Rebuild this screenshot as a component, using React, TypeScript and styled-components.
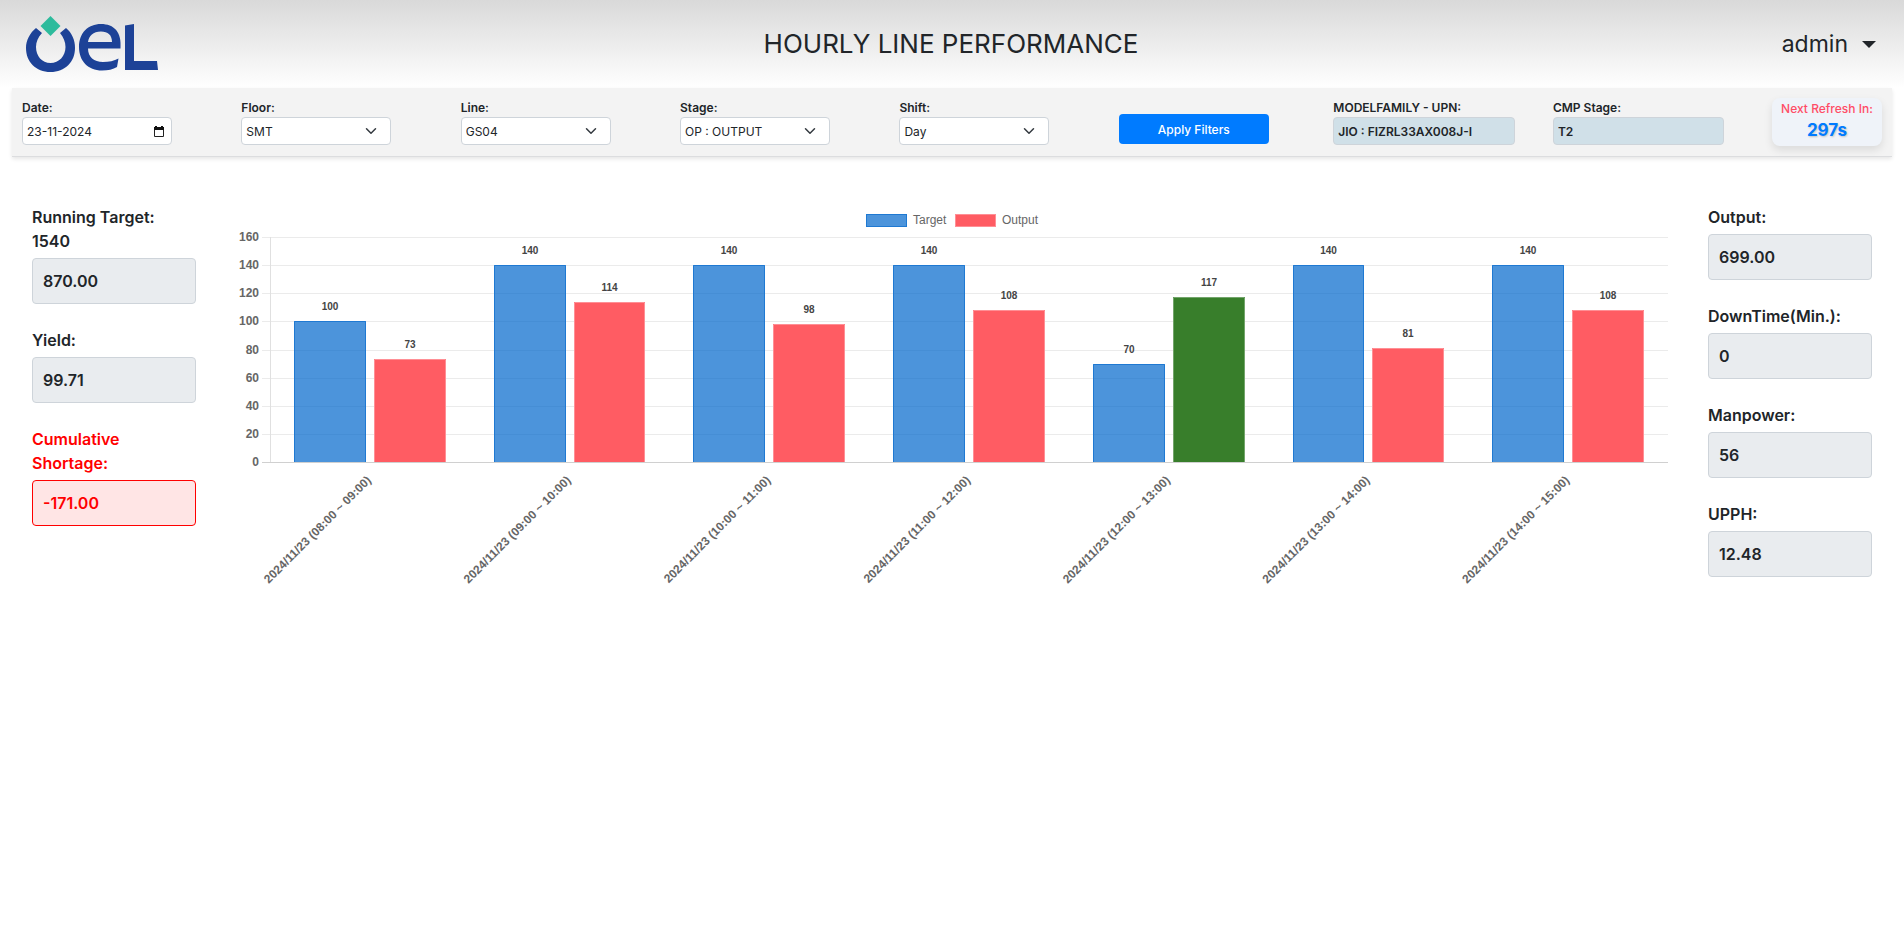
import { useLayoutEffect, useRef, useState } from "react";
import styled, { createGlobalStyle } from "styled-components";

const GlobalStyle = createGlobalStyle`
  *, *::before, *::after { box-sizing: border-box; }
  body {
    margin: 0;
    background: #fff;
    color: #212529;
    font: 400 16px/24px Inter, sans-serif;
  }
  input, select, button { font-family: inherit; }
`;

const Header = styled.header`
  display: grid;
  grid-template-columns: 1fr auto 1fr;
  align-items: center;
  height: 88px;
  padding: 0 28px 0 26px;
  background: linear-gradient(#d9d9d9, #fff);
`;

const Logo = styled.svg`
  display: block;
  width: 132px;
  height: 58px;
`;

const Title = styled.h1`
  margin: 0;
  font-size: 26px;
  line-height: 32px;
  font-weight: 400;
`;

const UserMenu = styled.button`
  justify-self: end;
  display: flex;
  align-items: center;
  gap: 14px;
  padding: 0;
  border: 0;
  background: none;
  color: #212529;
  font-size: 23px;
  line-height: 32px;
  font-weight: 400;
`;

const Caret = styled.span`
  border: 7px solid transparent;
  border-top-color: currentColor;
  border-bottom: 0;
`;

const FilterBar = styled.form`
  display: grid;
  grid-template-columns: repeat(5, 2193fr) 2145fr 2195fr 2190fr 1100fr;
  align-items: end;
  margin: 0 12px;
  padding: 10px 10px;
  background: #f3f3f3;
  border-bottom: 1px solid #dcdddf;
  box-shadow: 0 2px 4px rgba(0, 0, 0, 0.1);
`;

const Field = styled.div<{ $width: number }>`
  display: flex;
  flex-direction: column;
  width: ${(p) => p.$width}px;
  max-width: 100%;
  margin-bottom: 1px;
`;

const FieldLabel = styled.label`
  font-size: 12px;
  line-height: 18px;
  font-weight: 600;
`;

const Control = styled.input<{ $filled?: boolean }>`
  width: 100%;
  height: 28px;
  padding: 0 4px;
  border: 1px solid #ced4da;
  border-radius: 4px;
  background: ${(p) => (p.$filled ? "#d0e0e8" : "#fff")};
  color: #212529;
  font-size: 12px;
  font-weight: ${(p) => (p.$filled ? 600 : 400)};
`;

const ControlBox = styled.div`
  display: grid;
  align-items: center;
  > * { grid-area: 1 / 1; }
`;

const Select = styled(Control)`
  appearance: none;
`;

const Chevron = styled.svg`
  justify-self: end;
  width: 12px;
  height: 12px;
  margin-right: 14px;
  pointer-events: none;
`;

const CalendarIcon = styled.svg`
  justify-self: end;
  width: 10px;
  height: 11px;
  margin-right: 8px;
  pointer-events: none;
`;

const ApplyButton = styled.button`
  width: 150px;
  height: 30px;
  margin-bottom: 2px;
  border: 0;
  border-radius: 4px;
  background: #007bff;
  color: #fff;
  font-size: 12px;
  font-weight: 500;
`;

const Refresh = styled.div`
  height: 48px;
  padding-top: 2px;
  border-radius: 8px;
  background: #eff3f9;
  box-shadow: 0 4px 8px rgba(0, 0, 0, 0.1);
  text-align: center;
  white-space: nowrap;
  color: #ff4d67;
  font-size: 12px;
  line-height: 18px;
  font-weight: 500;
`;

const Countdown = styled.div`
  color: #007bff;
  font-size: 17px;
  line-height: 24px;
  font-weight: 700;
  text-shadow: 1px 1px 2px rgba(0, 0, 0, 0.2);
`;

const Main = styled.main`
  display: grid;
  grid-template-columns: 164px minmax(0, 1fr) 164px;
  align-items: start;
  padding: 48px 32px;
`;

const Stats = styled.section`
  display: grid;
  gap: 24px;
`;

const Stat = styled.div<{ $alert?: boolean }>`
  display: grid;
  gap: 5px;
  color: ${(p) => (p.$alert ? "#f00" : "#212529")};
  font-weight: 600;
`;

const StatValue = styled.input<{ $alert?: boolean }>`
  width: 100%;
  height: 46px;
  padding: 0 10px;
  border: 1px solid ${(p) => (p.$alert ? "#f00" : "#ced4da")};
  border-radius: 4px;
  background: ${(p) => (p.$alert ? "#ffe5e5" : "#e9ecef")};
  color: inherit;
  font-size: 16px;
  font-weight: 600;
`;

const ChartArea = styled.div`
  margin: 0 40px 0 33px;
`;

const ChartSvg = styled.svg`
  display: block;
  width: 100%;
  height: 390px;
  font-family: "Liberation Sans", Arial, sans-serif;
`;

const selects = [
  { id: "floor", label: "Floor:", value: "SMT" },
  { id: "line", label: "Line:", value: "GS04" },
  { id: "stage", label: "Stage:", value: "OP : OUTPUT" },
  { id: "shift", label: "Shift:", value: "Day" },
];

const leftStats = [
  { id: "running", label: "Running Target: 1540", value: "870.00" },
  { id: "yield", label: "Yield:", value: "99.71" },
  { id: "shortage", label: "Cumulative Shortage:", value: "-171.00", alert: true },
];

const rightStats = [
  { id: "output", label: "Output:", value: "699.00" },
  { id: "downtime", label: "DownTime(Min.):", value: "0" },
  { id: "manpower", label: "Manpower:", value: "56" },
  { id: "upph", label: "UPPH:", value: "12.48" },
];

const hours = [
  { label: "2024/11/23 (08:00 ~ 09:00)", target: 100, output: 73 },
  { label: "2024/11/23 (09:00 ~ 10:00)", target: 140, output: 114 },
  { label: "2024/11/23 (10:00 ~ 11:00)", target: 140, output: 98 },
  { label: "2024/11/23 (11:00 ~ 12:00)", target: 140, output: 108 },
  { label: "2024/11/23 (12:00 ~ 13:00)", target: 70, output: 117 },
  { label: "2024/11/23 (13:00 ~ 14:00)", target: 140, output: 81 },
  { label: "2024/11/23 (14:00 ~ 15:00)", target: 140, output: 108 },
];

const TARGET = { fill: "rgba(0,102,204,0.7)", stroke: "#1f79d2" };
const BEHIND = { fill: "#ff5c63", stroke: "#ff8f95" };
const AHEAD = { fill: "#387e2b", stroke: "#73a56b" };

type Tone = typeof TARGET;

function Bar({ x, width, value, base, unit, tone }: {
  x: number; width: number; value: number; base: number; unit: number; tone: Tone;
}) {
  const left = Math.round(x);
  const right = Math.round(x + width);
  const top = Math.round(base - value * unit);
  return (
    <g>
      <rect x={left} y={top} width={right - left} height={base - top} fill={tone.fill} />
      <path
        d={`M${left + 0.5} ${base}V${top + 0.5}H${right - 0.5}V${base}`}
        fill="none"
        stroke={tone.stroke}
      />
      <text x={(left + right) / 2} y={top - 11} textAnchor="middle" fontSize="10" fontWeight="700" fill="#444">
        {value}
      </text>
    </g>
  );
}

function Chart() {
  const box = useRef<HTMLDivElement>(null);
  const [width, setWidth] = useState(1439);

  useLayoutEffect(() => {
    const node = box.current;
    if (!node) return;
    const measure = () => setWidth(node.clientWidth);
    measure();
    const observer = new ResizeObserver(measure);
    observer.observe(node);
    return () => observer.disconnect();
  }, []);

  const left = 41;
  const top = 32;
  const base = 257;
  const unit = (base - top) / 160;
  const step = (width - left) / hours.length;
  const slot = step * 0.4;
  const barWidth = slot * 0.9;
  const middle = Math.round(width / 2) + 4;

  return (
    <ChartArea ref={box}>
      <ChartSvg role="img" aria-label="Target and output by hour">
        <g fontSize="12" fill="#666">
          <rect x={middle - 86.5} y="9.5" width="40" height="12" {...TARGET} />
          <text x={middle - 40} y="19">Target</text>
          <rect x={middle + 2.5} y="9.5" width="40" height="12" {...BEHIND} />
          <text x={middle + 49} y="19">Output</text>
        </g>
        {[0, 20, 40, 60, 80, 100, 120, 140, 160].map((tick) => {
          const y = Math.round(base - tick * unit);
          return (
            <g key={tick}>
              <path d={`M${left - 8} ${y + 0.5}H${width}`} stroke={tick ? "#ebebeb" : "#d0d0d0"} />
              <text x={left - 11} y={y + 4} textAnchor="end" fontSize="12" fontWeight="700" fill="#666">{tick}</text>
            </g>
          );
        })}
        <path d={`M${left + 0.5} ${top}V${base}`} stroke="#e0e0e0" />
        {hours.map((hour, i) => {
          const start = left + step * i + step * 0.1 + slot * 0.05;
          const centre = left + step * (i + 0.5);
          return (
            <g key={hour.label}>
              <Bar x={start} width={barWidth} value={hour.target} base={base} unit={unit} tone={TARGET} />
              <Bar
                x={start + slot}
                width={barWidth}
                value={hour.output}
                base={base}
                unit={unit}
                tone={hour.output >= hour.target ? AHEAD : BEHIND}
              />
              <text
                transform={`translate(${centre + 2} ${base + 19}) rotate(-45)`}
                textAnchor="end"
                fontSize="12"
                fontWeight="700"
                fill="#666"
              >
                {hour.label}
              </text>
            </g>
          );
        })}
      </ChartSvg>
    </ChartArea>
  );
}

function StatList({ items }: { items: { id: string; label: string; value: string; alert?: boolean }[] }) {
  return (
    <Stats>
      {items.map((s) => (
        <Stat key={s.id} $alert={s.alert}>
          <label htmlFor={s.id}>{s.label}</label>
          <StatValue id={s.id} value={s.value} readOnly $alert={s.alert} />
        </Stat>
      ))}
    </Stats>
  );
}

export default function App() {
  return (
    <>
      <GlobalStyle />
      <Header>
        <Logo viewBox="0 0 132 58" role="img" aria-label="OEL">
          <path d="M24.5 1 34.5 11 24.5 21 14.5 11Z" fill="#2dbb9c" />
          <g fill="#1d4297" fillRule="evenodd">
            <path d="M10 13 16 18C12 22 10 27 10 32C10 41 16 48 24.5 48S39.5 41 39.5 32C39.5 27 37.5 22 34 18L40 13C46 18 49 25 49 33C49 47 39 57 24.5 57S0 47 0 33C0 25 4 18 10 13Z" />
            <path d="M94.500 33.500H62C62 42 68 47 77 47C83 47 88 46 92.500 43.500L91 52C87 54.500 82 55.500 76 55.500C62 55.500 53 46 53 32C53 18 62 9 75 9C88 9 96 17 94.500 33.500ZM62 27H86C86 20 82 16.500 75 16.500C67 16.500 63 21 62 27Z" />
            <path d="M99 10.500 108 9V46H131L132 55H99Z" />
          </g>
        </Logo>
        <Title>HOURLY LINE PERFORMANCE</Title>
        <UserMenu type="button">
          admin
          <Caret />
        </UserMenu>
      </Header>

      <FilterBar>
        <Field $width={150}>
          <FieldLabel htmlFor="date">Date:</FieldLabel>
          <ControlBox>
            <Control id="date" type="text" defaultValue="23-11-2024" />
            <CalendarIcon viewBox="0 0 10 11" aria-hidden="true">
              <path d="M0.500 1.500H9.500V10.500H0.500Z" fill="none" stroke="#222" />
              <path d="M0 1H10V4H0ZM1 0H3V1H1ZM7 0H9V1H7Z" fill="#111" />
            </CalendarIcon>
          </ControlBox>
        </Field>
        {selects.map((s) => (
          <Field key={s.id} $width={150}>
            <FieldLabel htmlFor={s.id}>{s.label}</FieldLabel>
            <ControlBox>
              <Select as="select" id={s.id}>
                <option>{s.value}</option>
              </Select>
              <Chevron viewBox="0 0 16 16" aria-hidden="true">
                <path d="m2 5 6 6 6-6" fill="none" stroke="#343a40" strokeWidth="2" strokeLinecap="round" strokeLinejoin="round" />
              </Chevron>
            </ControlBox>
          </Field>
        ))}
        <ApplyButton type="button">Apply Filters</ApplyButton>
        <Field $width={182}>
          <FieldLabel htmlFor="model">MODELFAMILY - UPN:</FieldLabel>
          <Control id="model" value="JIO : FIZRL33AX008J-I" readOnly $filled />
        </Field>
        <Field $width={171}>
          <FieldLabel htmlFor="cmp">CMP Stage:</FieldLabel>
          <Control id="cmp" value="T2" readOnly $filled />
        </Field>
        <Refresh>
          Next Refresh In:
          <Countdown>297s</Countdown>
        </Refresh>
      </FilterBar>

      <Main>
        <StatList items={leftStats} />
        <Chart />
        <StatList items={rightStats} />
      </Main>
    </>
  );
}
